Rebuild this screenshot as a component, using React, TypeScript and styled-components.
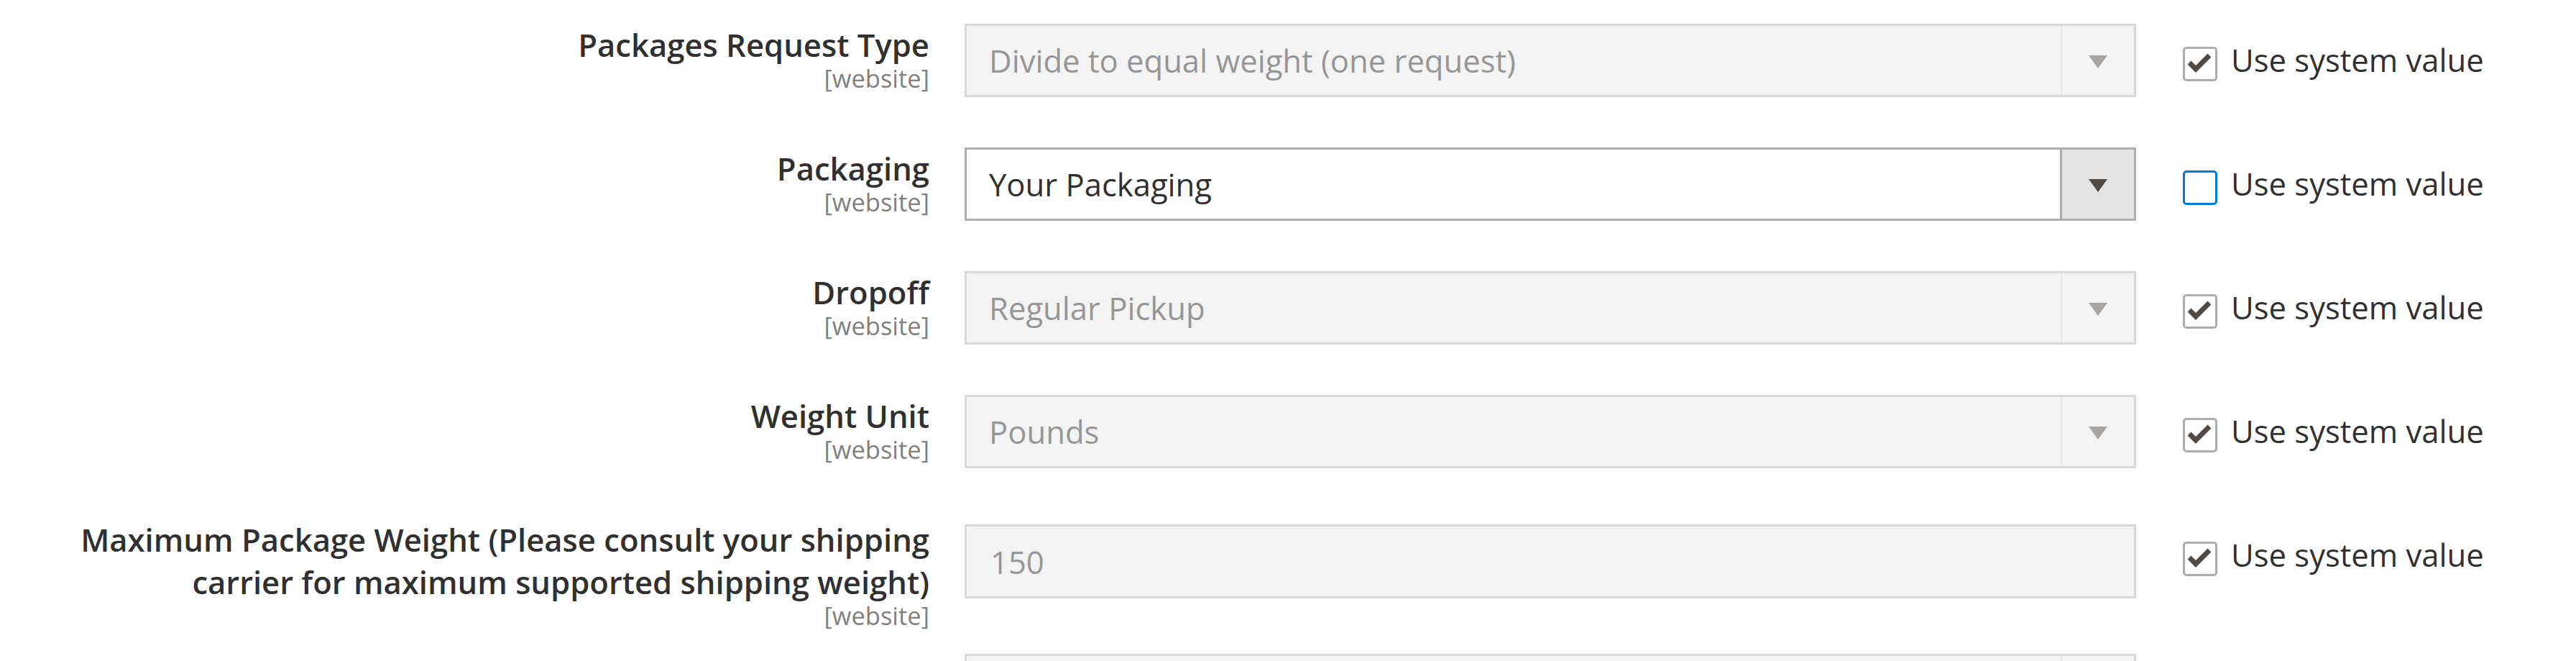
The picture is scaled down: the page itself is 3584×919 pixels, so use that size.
import React from 'react';
import styled, { createGlobalStyle } from 'styled-components';

interface Field {
  label: string;
  value: string;
  kind: 'select' | 'text';
  disabled: boolean;
  useSystem: boolean;
  focused?: boolean;
}

const fields: Field[] = [
  { label: 'Packages Request Type', value: 'Divide to equal weight (one request)', kind: 'select', disabled: true, useSystem: true },
  { label: 'Packaging', value: 'Your Packaging', kind: 'select', disabled: false, useSystem: false, focused: true },
  { label: 'Dropoff', value: 'Regular Pickup', kind: 'select', disabled: true, useSystem: true },
  { label: 'Weight Unit', value: 'Pounds', kind: 'select', disabled: true, useSystem: true },
  {
    label: 'Maximum Package Weight (Please consult your shipping carrier for maximum supported shipping weight)',
    value: '150',
    kind: 'text',
    disabled: true,
    useSystem: true,
  },
  { label: 'Calculate Handling Fee', value: 'Fixed', kind: 'select', disabled: true, useSystem: true },
];

const fontSize = 43.6;

const CheckMark = () => (
  <svg width="42" height="42" viewBox="0 0 42 42">
    <polyline points="6,19 15,28 34,9" fill="none" stroke="#514943" strokeWidth="7" strokeLinejoin="miter" />
  </svg>
);

const App = (): JSX.Element => (
  <>
    <GlobalStyle />
    <Form>
      {fields.map((f) => (
        <Row key={f.label}>
          <LabelCell>
            <LabelText>
              {f.label}
              <Scope>[website]</Scope>
            </LabelText>
          </LabelCell>
          <ValueCell>
            {f.kind === 'select' ? (
              <SelectBox $disabled={f.disabled}>
                <SelectValue $disabled={f.disabled}>{f.value}</SelectValue>
                <ArrowBox $disabled={f.disabled}>
                  <Arrow $disabled={f.disabled} />
                </ArrowBox>
              </SelectBox>
            ) : (
              <TextInput $disabled={f.disabled}>{f.value}</TextInput>
            )}
          </ValueCell>
          <UseDefault>
            <Checkbox $focused={!!f.focused}>{f.useSystem && <CheckMark />}</Checkbox>
            <UseText>Use system value</UseText>
          </UseDefault>
        </Row>
      ))}
    </Form>
  </>
);

const GlobalStyle = createGlobalStyle`
  html, body {
    margin: 0;
    padding: 0;
    background: #fff;
    overflow: hidden;
  }
  body {
    font-family: "Open Sans", "Liberation Sans", sans-serif;
    color: #303030;
  }
`;

const Form = styled.div`
  display: flex;
  flex-direction: column;
  gap: 70px;
  padding: 33px 0 0 80px;
`;

const Row = styled.div`
  display: flex;
  align-items: flex-start;
`;

const LabelCell = styled.div`
  flex: none;
  width: 1213px;
  text-align: right;
`;

const LabelText = styled.span`
  position: relative;
  display: inline-block;
  font-size: ${fontSize}px;
  font-weight: 600;
  line-height: 59px;
  color: #303030;
`;

const Scope = styled.span`
  position: absolute;
  top: calc(100% + 2px);
  right: 0;
  font-size: 34.5px;
  font-weight: 400;
  line-height: 30px;
  color: #808080;
  white-space: nowrap;
`;

const ValueCell = styled.div`
  flex: none;
  width: 1630px;
  margin-left: 49px;
`;

const SelectBox = styled.div<{ $disabled: boolean }>`
  display: flex;
  box-sizing: border-box;
  height: 102px;
  border: 3px solid ${(p) => (p.$disabled ? '#d8d8d8' : '#adadad')};
  background: ${(p) => (p.$disabled ? '#f3f3f3' : '#fff')};
`;

const SelectValue = styled.span<{ $disabled: boolean }>`
  flex: 1;
  display: flex;
  align-items: center;
  padding-left: 31px;
  font-size: ${fontSize}px;
  color: ${(p) => (p.$disabled ? '#969696' : '#303030')};
`;

const ArrowBox = styled.span<{ $disabled: boolean }>`
  flex: none;
  width: 100px;
  display: flex;
  align-items: center;
  justify-content: center;
  border-left: ${(p) => (p.$disabled ? '2px solid #e4e4e4' : '3px solid #adadad')};
  background: ${(p) => (p.$disabled ? '#f3f3f3' : '#e3e3e3')};
`;

const Arrow = styled.span<{ $disabled: boolean }>`
  width: 0;
  height: 0;
  margin-top: 4px;
  border-top: 18px solid ${(p) => (p.$disabled ? '#a8a4a1' : '#514943')};
  border-left: 13px solid transparent;
  border-right: 13px solid transparent;
`;

const TextInput = styled.div<{ $disabled: boolean }>`
  box-sizing: border-box;
  height: 103px;
  margin-top: 8px;
  display: flex;
  align-items: center;
  padding-left: 33px;
  font-size: ${fontSize}px;
  border: 3px solid ${(p) => (p.$disabled ? '#d8d8d8' : '#adadad')};
  background: ${(p) => (p.$disabled ? '#f3f3f3' : '#fff')};
  color: ${(p) => (p.$disabled ? '#969696' : '#303030')};
`;

const UseDefault = styled.label`
  display: flex;
  align-items: flex-end;
  gap: 19px;
  margin-left: 65px;
  padding-top: 21px;
`;

const Checkbox = styled.span<{ $focused: boolean }>`
  box-sizing: border-box;
  width: 48px;
  height: 48px;
  display: flex;
  border: 3px solid ${(p) => (p.$focused ? '#007bdb' : '#adadad')};
  border-radius: 5px;
  background: #fff;
`;

const UseText = styled.span`
  font-size: ${fontSize}px;
  line-height: 59px;
  color: #303030;
  white-space: nowrap;
`;

export default App;
